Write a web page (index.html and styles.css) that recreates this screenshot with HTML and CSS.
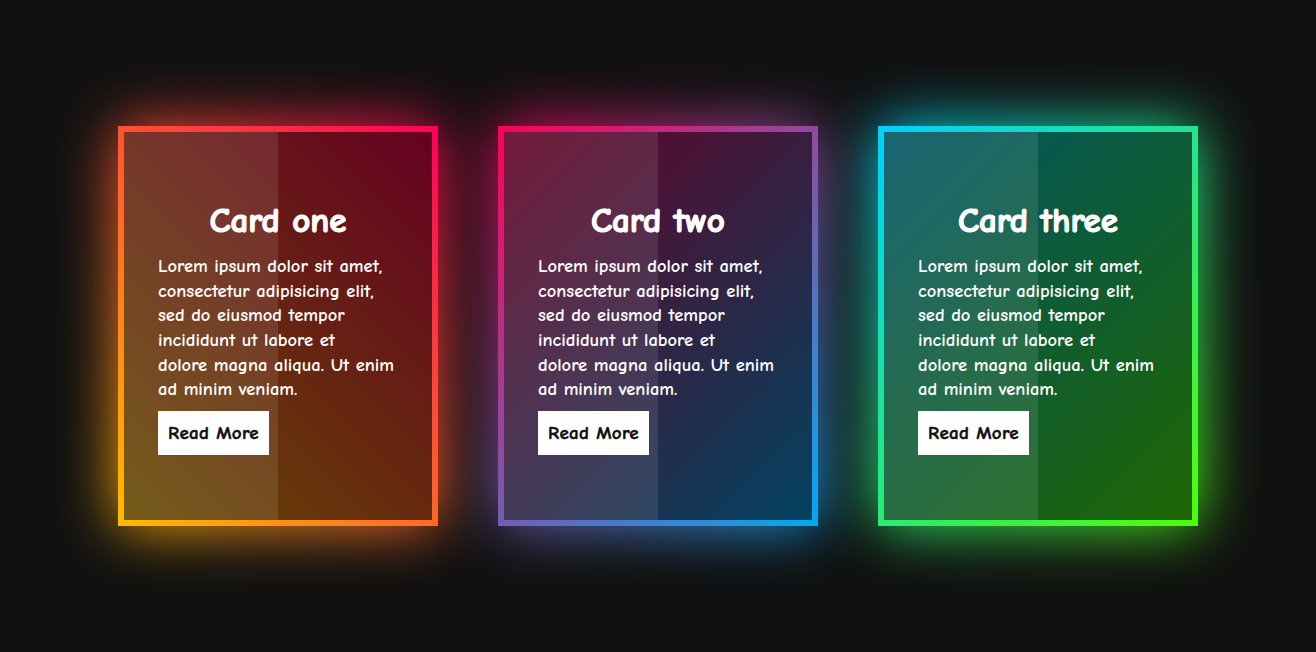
FILE: index.html
```html
<!DOCTYPE html>
<html lang="en">
<head>
<meta charset="utf-8">
<title>Glowing Cards</title>
<link rel="stylesheet" href="styles.css">
</head>
<body>
  <main class="cards">
    <div class="card card-one">
      <span class="panel"></span>
      <div class="content">
        <h2>Card one</h2>
        <p>Lorem ipsum dolor sit amet,<br>consectetur adipisicing elit,<br>sed do eiusmod tempor<br>incididunt ut labore et<br>dolore magna aliqua. Ut enim<br>ad minim veniam.</p>
        <a href="#">Read More</a>
      </div>
    </div>
    <div class="card card-two">
      <span class="panel"></span>
      <div class="content">
        <h2>Card two</h2>
        <p>Lorem ipsum dolor sit amet,<br>consectetur adipisicing elit,<br>sed do eiusmod tempor<br>incididunt ut labore et<br>dolore magna aliqua. Ut enim<br>ad minim veniam.</p>
        <a href="#">Read More</a>
      </div>
    </div>
    <div class="card card-three">
      <span class="panel"></span>
      <div class="content">
        <h2>Card three</h2>
        <p>Lorem ipsum dolor sit amet,<br>consectetur adipisicing elit,<br>sed do eiusmod tempor<br>incididunt ut labore et<br>dolore magna aliqua. Ut enim<br>ad minim veniam.</p>
        <a href="#">Read More</a>
      </div>
    </div>
  </main>
</body>
</html>
```
FILE: styles.css
```css
* {
  margin: 0;
  padding: 0;
  box-sizing: border-box;
}

body {
  min-height: 100vh;
  background: #111;
  font-family: "Comic Sans MS", "Comic Neue", "Open Sans", sans-serif;
  display: flex;
  justify-content: center;
  align-items: center;
}

.cards {
  display: flex;
  gap: 60px;
}

.card {
  position: relative;
  width: 320px;
  height: 400px;
  display: flex;
  justify-content: center;
  align-items: center;
}

.card-one { --grad: linear-gradient(45deg, #ffbc00, #ff0058); }
.card-two { --grad: linear-gradient(135deg, #ff0058, #03a9f4); }
.card-three { --grad: linear-gradient(315deg, #4dff03, #00d0ff); }

.card::before,
.card::after {
  content: "";
  position: absolute;
  inset: 0;
  background: var(--grad);
}

.card::before {
  filter: blur(30px);
}

.panel {
  position: absolute;
  inset: 6px;
  background: rgba(0, 0, 0, 0.6);
  z-index: 1;
  overflow: hidden;
}

.panel::before {
  content: "";
  position: absolute;
  top: 0;
  left: 0;
  width: 50%;
  height: 100%;
  background: rgba(255, 255, 255, 0.1);
}

.content {
  position: relative;
  z-index: 2;
  width: 320px;
  padding: 20px 40px;
  color: #fff;
}

.content h2 {
  font-size: 35px;
  line-height: 44px;
  font-weight: 700;
  text-align: center;
  margin-top: 2px;
  margin-bottom: 11px;
  -webkit-text-stroke: 1.2px #fff;
}

.content p {
  font-size: 18.5px;
  font-weight: 700;
  line-height: 24.6px;
  margin-bottom: 4px;
  white-space: nowrap;
}

.content a {
  display: inline-block;
  margin-top: 5px;
  padding: 10px;
  background: #fff;
  color: #111;
  font-size: 19px;
  line-height: 24px;
  font-weight: 700;
  letter-spacing: 0.3px;
  text-decoration: none;
  -webkit-text-stroke: 0.5px #111;
}
```
